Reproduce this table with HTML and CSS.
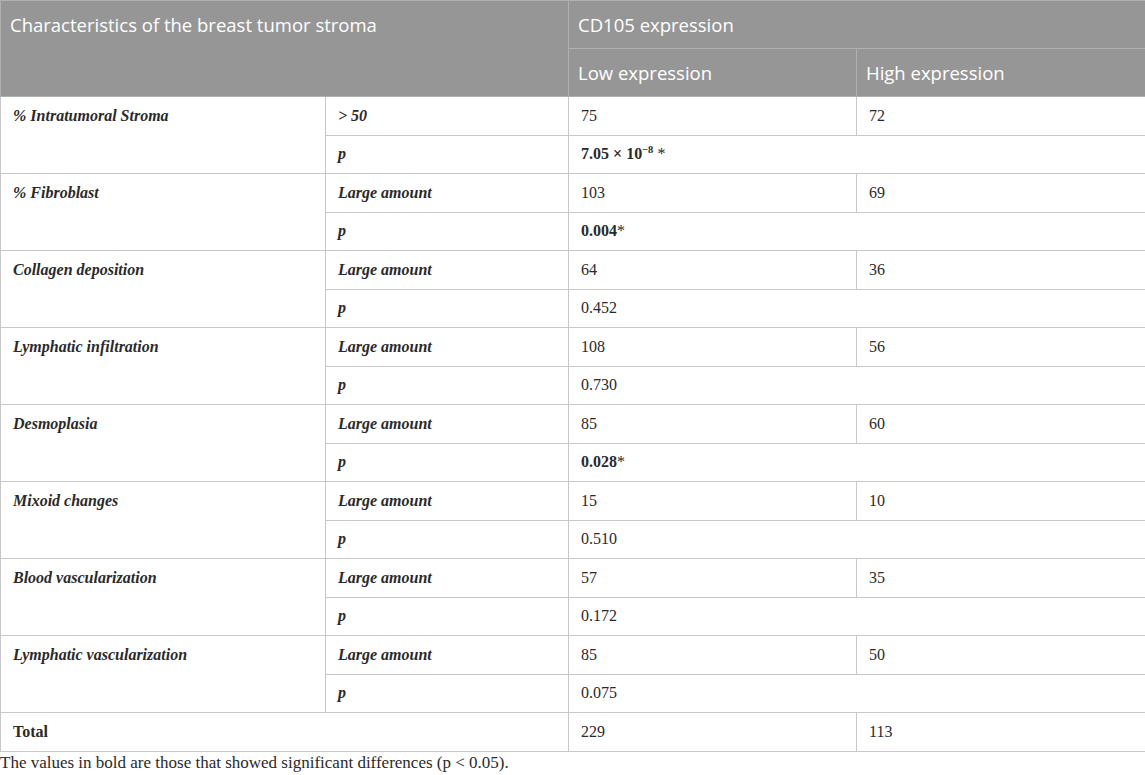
FILE: index.html
```html
<!DOCTYPE html>
<html>
<head>
<meta charset="utf-8">
<link rel="stylesheet" href="styles.css">
</head>
<body>
<div class="wrap">
<table class="data">
  <colgroup>
    <col class="c1"><col class="c2"><col class="c3"><col class="c4">
  </colgroup>
  <thead>
    <tr class="h1">
      <th colspan="2" rowspan="2" class="htop">Characteristics of the breast tumor stroma</th>
      <th colspan="2">CD105 expression</th>
    </tr>
    <tr class="h2">
      <th>Low expression</th>
      <th>High expression</th>
    </tr>
  </thead>
  <tbody>
    <tr><td rowspan="2" class="lab grp">% Intratumoral Stroma</td><td class="lab">&gt; 50</td><td>75</td><td>72</td></tr>
    <tr><td class="lab">p</td><td colspan="2"><b>7.05 × 10<sup>−8</sup></b> *</td></tr>
    <tr><td rowspan="2" class="lab grp">% Fibroblast</td><td class="lab">Large amount</td><td>103</td><td>69</td></tr>
    <tr><td class="lab">p</td><td colspan="2"><b>0.004</b>*</td></tr>
    <tr><td rowspan="2" class="lab grp">Collagen deposition</td><td class="lab">Large amount</td><td>64</td><td>36</td></tr>
    <tr><td class="lab">p</td><td colspan="2">0.452</td></tr>
    <tr><td rowspan="2" class="lab grp">Lymphatic infiltration</td><td class="lab">Large amount</td><td>108</td><td>56</td></tr>
    <tr><td class="lab">p</td><td colspan="2">0.730</td></tr>
    <tr><td rowspan="2" class="lab grp">Desmoplasia</td><td class="lab">Large amount</td><td>85</td><td>60</td></tr>
    <tr><td class="lab">p</td><td colspan="2"><b>0.028</b>*</td></tr>
    <tr><td rowspan="2" class="lab grp">Mixoid changes</td><td class="lab">Large amount</td><td>15</td><td>10</td></tr>
    <tr><td class="lab">p</td><td colspan="2">0.510</td></tr>
    <tr><td rowspan="2" class="lab grp">Blood vascularization</td><td class="lab">Large amount</td><td>57</td><td>35</td></tr>
    <tr><td class="lab">p</td><td colspan="2">0.172</td></tr>
    <tr><td rowspan="2" class="lab grp">Lymphatic vascularization</td><td class="lab">Large amount</td><td>85</td><td>50</td></tr>
    <tr><td class="lab">p</td><td colspan="2">0.075</td></tr>
    <tr><td colspan="2" class="total">Total</td><td>229</td><td>113</td></tr>
  </tbody>
</table>
<p class="note">The values in bold are those that showed significant differences (p &lt; 0.05).</p>
</div>
</body>
</html>
```

FILE: styles.css
```css
html, body {
  margin: 0;
  padding: 0;
  background: #fff;
}
.wrap {
  width: 1145px;
}
.data {
  width: 1145px;
  border-collapse: collapse;
  table-layout: fixed;
  font-family: "Liberation Serif", "Times New Roman", serif;
  font-size: 16px;
  color: #2a2a2a;
}
.c1 { width: 325px; }
.c2 { width: 243px; }
.c3 { width: 288px; }
.c4 { width: 289px; }
.data th {
  background: #969696;
  color: #fff;
  font-family: "Open Sans", "Noto Sans", sans-serif;
  font-weight: normal;
  font-size: 18.5px;
  text-align: left;
  padding: 0 9px;
  height: 47px;
  border: 1px solid #b0b0b0;
}
.data th.htop {
  vertical-align: top;
  padding-top: 11px;
  line-height: 26px;
}
.data td {
  border: 1px solid #c8c8c8;
  padding: 0 12px;
  height: 37.5px;
  vertical-align: middle;
}
.data td.grp {
  vertical-align: top;
  padding-top: 10px;
  line-height: 18px;
}
.data td.lab {
  font-weight: bold;
  font-style: italic;
}
.data td.total {
  font-weight: bold;
}
.data sup {
  font-size: 10.5px;
  vertical-align: 6px;
  line-height: 0;
}
.note {
  margin: 0;
  padding-top: 1px;
  font-family: "Liberation Serif", "Times New Roman", serif;
  font-size: 17px;
  color: #2a2a2a;
}
```
